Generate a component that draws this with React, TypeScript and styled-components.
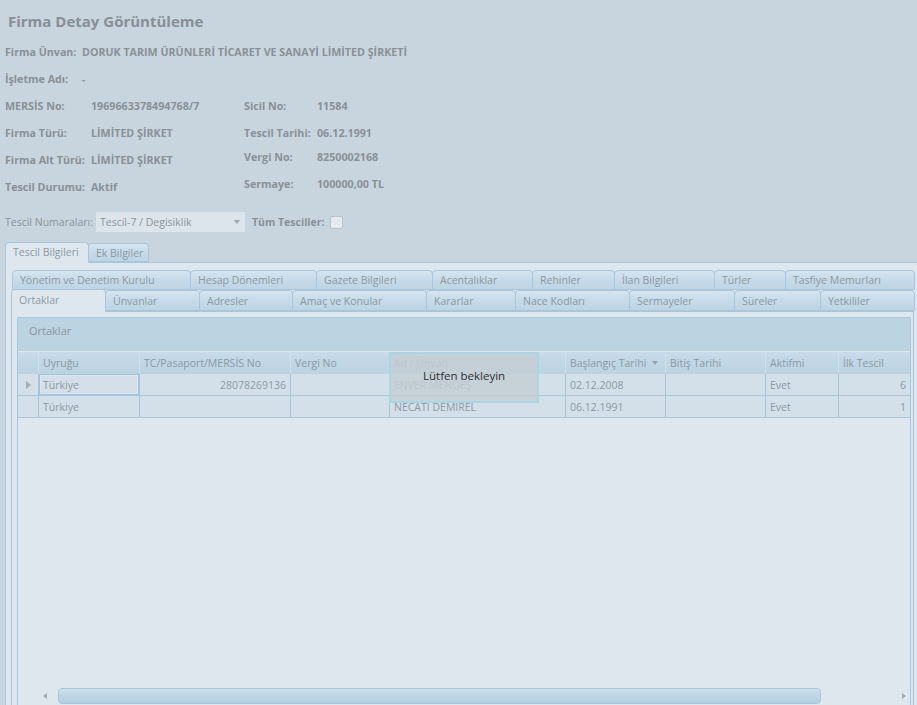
import React from 'react';
import styled, { createGlobalStyle } from 'styled-components';

const GlobalStyle = createGlobalStyle`
  html, body {
    margin: 0;
    padding: 0;
    background: #c8d5df;
    font-family: "Open Sans", "DejaVu Sans", sans-serif;
    overflow: hidden;
  }
  * { box-sizing: border-box; }
`;

const fields = [
  { label: 'MERSİS No:', value: '1969663378494768/7', label2: 'Sicil No:', value2: '11584' },
  { label: 'Firma Türü:', value: 'LİMİTED ŞİRKET', label2: 'Tescil Tarihi:', value2: '06.12.1991' },
  { label: 'Firma Alt Türü:', value: 'LİMİTED ŞİRKET', label2: 'Vergi No:', value2: '8250002168', up: true },
  { label: 'Tescil Durumu:', value: 'Aktif', label2: 'Sermaye:', value2: '100000,00 TL', up: true }
];

const innerRow1 = [
  { label: 'Yönetim ve Denetim Kurulu', w: 178 },
  { label: 'Hesap Dönemleri', w: 126 },
  { label: 'Gazete Bilgileri', w: 116 },
  { label: 'Acentalıklar', w: 100 },
  { label: 'Rehinler', w: 82 },
  { label: 'İlan Bilgileri', w: 100 },
  { label: 'Türler', w: 71 },
  { label: 'Tasfiye Memurları', w: 129 }
];

const innerRow2 = [
  { label: 'Ortaklar', w: 94, active: true },
  { label: 'Ünvanlar', w: 94 },
  { label: 'Adresler', w: 93 },
  { label: 'Amaç ve Konular', w: 134 },
  { label: 'Kararlar', w: 89 },
  { label: 'Nace Kodları', w: 114 },
  { label: 'Sermayeler', w: 105 },
  { label: 'Süreler', w: 86 },
  { label: 'Yetkililer', w: 94 }
];

const columns = [
  { title: 'Uyruğu', w: 101 },
  { title: 'TC/Pasaport/MERSİS No', w: 151 },
  { title: 'Vergi No', w: 99 },
  { title: 'Ad / Ünvan', w: 176 },
  { title: 'Başlangıç Tarihi', w: 100, sort: true },
  { title: 'Bitiş Tarihi', w: 100 },
  { title: 'Aktifmi', w: 73 },
  { title: 'İlk Tescil', w: 72 }
];

const rows = [
  { cells: ['Türkiye', '28078269136', '', 'ENVER MENDEŞ', '02.12.2008', '', 'Evet', '6'], current: true },
  { cells: ['Türkiye', '', '', 'NECATI DEMIREL', '06.12.1991', '', 'Evet', '1'] }
];

const rightAligned = [1, 7];

const Page = styled.div`
  height: 707px;
  display: flex;
  flex-direction: column;
  overflow: hidden;
  color: #8a9096;
`;

const Title = styled.h1`
  margin: 0;
  padding: 4px 0 0 8px;
  height: 38px;
  line-height: 34px;
  font-size: 15px;
  font-weight: 700;
  color: #888e94;
`;

const InfoRow = styled.div`
  display: grid;
  grid-template-columns: 77px 1fr;
  height: 27px;
  align-items: center;
  padding-left: 5px;
  font-size: 10.7px;
  font-weight: 700;
`;

const InfoGrid = styled.div`
  display: grid;
  grid-template-columns: 86px 153px 73px 1fr;
  grid-auto-rows: 27px;
  align-items: center;
  padding-left: 5px;
  font-size: 10.7px;
  font-weight: 700;
`;

const Cell = styled.span<{ $up?: boolean }>`
  white-space: nowrap;
  margin-top: ${p => (p.$up ? '-6px' : '0')};
`;

const FilterRow = styled.div`
  display: flex;
  align-items: center;
  height: 20px;
  margin-top: 12px;
  padding-left: 5px;
  font-size: 10.5px;
`;

const FilterLabel = styled.span`
  width: 91px;
  white-space: nowrap;
  color: #8c939a;
`;

const Combo = styled.div`
  width: 149px;
  height: 20px;
  background: #dde5ec;
  display: flex;
  align-items: center;
  justify-content: space-between;
  padding: 0 5px 0 4px;
  color: #8c949b;
  font-size: 10.5px;
`;

const ComboArrow = styled.span`
  width: 0;
  height: 0;
  border-left: 3.5px solid transparent;
  border-right: 3.5px solid transparent;
  border-top: 4px solid #9aa5ae;
`;

const BoldLabel = styled.span`
  margin-left: 7px;
  font-weight: 700;
  white-space: nowrap;
`;

const Check = styled.span`
  width: 13px;
  height: 13px;
  margin-left: 5px;
  background: #e4eaef;
  border: 1px solid #b3c3cf;
  border-radius: 2px;
`;

const TabStrip = styled.div<{ $indent?: number }>`
  display: flex;
  align-items: flex-end;
  padding-left: ${p => p.$indent || 0}px;
  position: relative;
  z-index: 1;
`;

const Tab = styled.div<{ $w: number; $active?: boolean; $h?: number }>`
  width: ${p => p.$w}px;
  height: ${p => (p.$active ? (p.$h || 20) + 2 : p.$h || 20)}px;
  margin-bottom: ${p => (p.$active ? '-1px' : '0')};
  padding-left: 7px;
  display: flex;
  align-items: center;
  font-size: 10.5px;
  white-space: nowrap;
  overflow: hidden;
  color: #8b98a3;
  border: 1px solid #a9c6dc;
  border-bottom: ${p => (p.$active ? 'none' : '1px solid #a9c6dc')};
  border-radius: 4px 4px 0 0;
  background: ${p =>
    p.$active ? '#dfe7ee' : 'linear-gradient(#d6e5f0 0%, #c8dbe9 45%, #bed4e4 100%)'};
  padding-bottom: ${p => (p.$active ? '2px' : '0')};
  & + & { margin-left: -1px; }
`;

const OuterPanel = styled.div`
  flex: 1;
  margin-left: 5px;
  border: 1px solid #a9c6dc;
  border-right: none;
  background: #dfe7ee;
  padding: 7px 2px 0 5px;
  display: flex;
  flex-direction: column;
  min-height: 0;
`;

const InnerPanel = styled.div`
  flex: 1;
  width: 903px;
  border: 1px solid #a9c6dc;
  background: #dfe7ee;
  padding: 5px 2px 0 5px;
  display: flex;
  flex-direction: column;
  min-height: 0;
`;

const GridBox = styled.div`
  flex: 1;
  position: relative;
  border: 1px solid #a9c6dc;
  border-bottom: none;
  display: flex;
  flex-direction: column;
  background: #dfe7ee;
  overflow: hidden;
`;

const GroupPanel = styled.div`
  height: 33px;
  background: #bcd3e1;
  padding: 5px 0 0 11px;
  line-height: 16px;
  font-size: 11px;
  color: #8a97a2;
`;

const GridRow = styled.div<{ $header?: boolean }>`
  display: flex;
  height: 22px;
  background: ${p =>
    p.$header
      ? 'linear-gradient(#c9dcea 0%, #c2d8e7 35%, #bcd3e2 100%)'
      : '#d3e0ea'};
  border-bottom: 1px solid ${p => (p.$header ? '#bcd3e2' : '#a6c5da')};
  margin-top: ${p => (p.$header ? '1px' : '0')};
`;

const Indicator = styled.div<{ $header?: boolean }>`
  width: 21px;
  flex: none;
  border-right: 1px solid ${p => (p.$header ? '#d0e1ec' : '#a6c5da')};
  display: flex;
  align-items: center;
  justify-content: center;
`;

const RowArrow = styled.span`
  width: 0;
  height: 0;
  border-top: 4.5px solid transparent;
  border-bottom: 4.5px solid transparent;
  border-left: 5px solid #a4adb5;
`;

const GridCell = styled.div<{ $w: number; $right?: boolean; $header?: boolean; $focus?: boolean }>`
  width: ${p => p.$w}px;
  flex: none;
  padding: 0 4px;
  display: flex;
  align-items: center;
  justify-content: ${p => (p.$right ? 'flex-end' : 'flex-start')};
  font-size: 10.5px;
  color: #8b98a3;
  white-space: nowrap;
  overflow: hidden;
  border-right: 1px solid ${p => (p.$header ? '#d0e1ec' : '#a6c5da')};
  box-shadow: ${p => (p.$focus ? 'inset 0 0 0 1px #a3c4dc, inset 0 0 0 2px #dbe6ee' : 'none')};
`;

const SortArrow = styled.span`
  margin-left: 6px;
  width: 0;
  height: 0;
  border-left: 3.5px solid transparent;
  border-right: 3.5px solid transparent;
  border-top: 4px solid #98a3ad;
`;

const Empty = styled.div`
  flex: 1;
`;

const ScrollBar = styled.div`
  height: 18px;
  display: flex;
  align-items: center;
  padding: 0 4px 1px 25px;
`;

const ScrollArrow = styled.span<{ $dir: 'left' | 'right' }>`
  width: 0;
  height: 0;
  border-top: 3.5px solid transparent;
  border-bottom: 3.5px solid transparent;
  ${p =>
    p.$dir === 'left'
      ? 'border-right: 4px solid #a3acb4; margin-right: 8px;'
      : 'border-left: 4px solid #a3acb4; margin-left: 6px;'}
`;

const Track = styled.div`
  flex: 1;
  height: 16px;
  display: flex;
  align-items: center;
`;

const Thumb = styled.div`
  width: 763px;
  height: 16px;
  margin-left: 3px;
  border: 1px solid #a8c7dd;
  border-radius: 4px;
  background: linear-gradient(#cfe1ed 0%, #c0d7e7 40%, #b6cfe1 100%);
`;

const Loading = styled.div`
  position: absolute;
  left: 371px;
  top: 34px;
  width: 150px;
  height: 51px;
  background: rgba(196, 206, 213, 0.85);
  border: 2px solid #aad6e3;
  display: flex;
  align-items: center;
  padding: 0 0 4px 32px;
  font-size: 11.5px;
  color: #2b2f33;
`;

const App: React.FC = () => {
  return (
    <Page>
      <GlobalStyle />
      <Title>Firma Detay Görüntüleme</Title>
      <InfoRow>
        <Cell>Firma Ünvan:</Cell>
        <Cell>DORUK TARIM ÜRÜNLERİ TİCARET VE SANAYİ LİMİTED ŞİRKETİ</Cell>
      </InfoRow>
      <InfoRow>
        <Cell>İşletme Adı:</Cell>
        <Cell>-</Cell>
      </InfoRow>
      <InfoGrid>
        {fields.map((f, i) => (
          <React.Fragment key={i}>
            <Cell>{f.label}</Cell>
            <Cell>{f.value}</Cell>
            <Cell $up={f.up}>{f.label2}</Cell>
            <Cell $up={f.up}>{f.value2}</Cell>
          </React.Fragment>
        ))}
      </InfoGrid>
      <FilterRow>
        <FilterLabel>Tescil Numaraları:</FilterLabel>
        <Combo>
          <span>Tescil-7 / Degisiklik</span>
          <ComboArrow />
        </Combo>
        <BoldLabel>Tüm Tesciller:</BoldLabel>
        <Check />
      </FilterRow>
      <TabStrip $indent={5} style={{ marginTop: 10 }}>
        <Tab $w={84} $h={19} $active>Tescil Bilgileri</Tab>
        <Tab $w={61} $h={19}>Ek Bilgiler</Tab>
      </TabStrip>
      <OuterPanel>
        <TabStrip $indent={1}>
          {innerRow1.map(t => (
            <Tab key={t.label} $w={t.w + 1}>{t.label}</Tab>
          ))}
        </TabStrip>
        <TabStrip style={{ marginTop: -1 }}>
          {innerRow2.map(t => (
            <Tab key={t.label} $w={t.w + 1} $h={21} $active={t.active}>{t.label}</Tab>
          ))}
        </TabStrip>
        <InnerPanel>
          <GridBox>
            <GroupPanel>Ortaklar</GroupPanel>
            <GridRow $header>
              <Indicator $header />
              {columns.map(c => (
                <GridCell key={c.title} $w={c.w} $header>
                  {c.title}
                  {c.sort && <SortArrow />}
                </GridCell>
              ))}
            </GridRow>
            {rows.map((r, ri) => (
              <GridRow key={ri}>
                <Indicator>{r.current && <RowArrow />}</Indicator>
                {r.cells.map((v, ci) => (
                  <GridCell
                    key={ci}
                    $w={columns[ci].w}
                    $right={rightAligned.includes(ci)}
                    $focus={r.current && ci === 0}
                  >
                    {v}
                  </GridCell>
                ))}
              </GridRow>
            ))}
            <Empty />
            <ScrollBar>
              <ScrollArrow $dir="left" />
              <Track>
                <Thumb />
              </Track>
              <ScrollArrow $dir="right" />
            </ScrollBar>
            <Loading>Lütfen bekleyin</Loading>
          </GridBox>
        </InnerPanel>
      </OuterPanel>
    </Page>
  );
};

export default App;
